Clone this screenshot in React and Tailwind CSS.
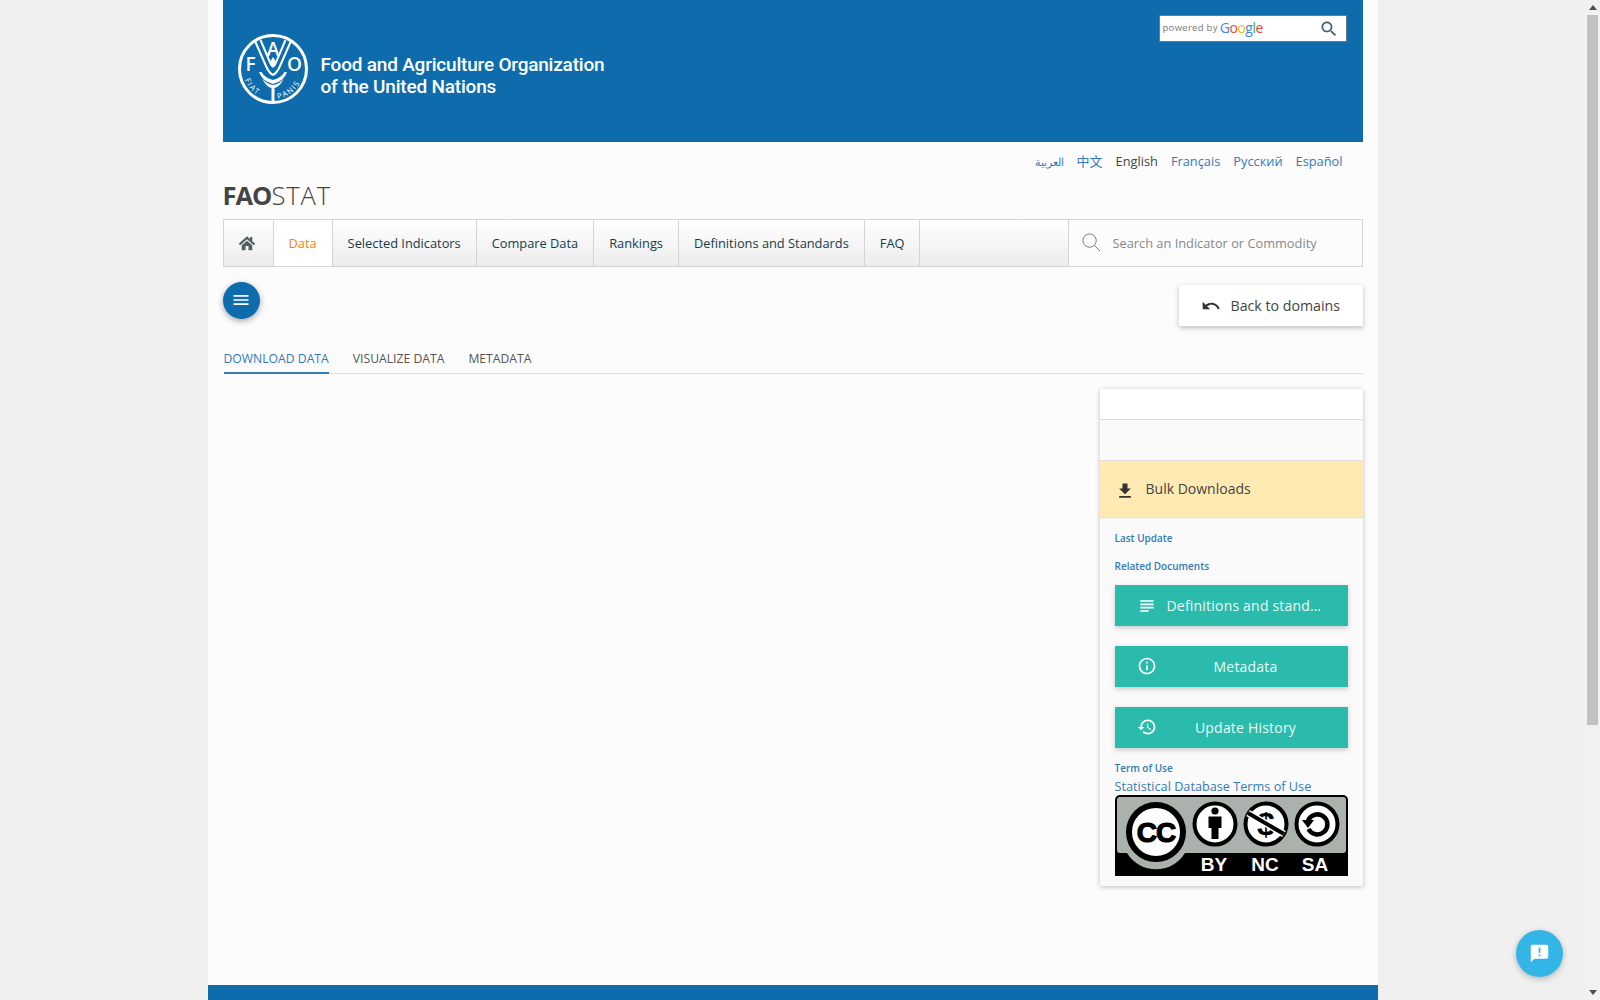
import React from 'react';

const LANGS = [
  { label: 'العربية', small: true },
  { label: '中文', cjk: true },
  { label: 'English', active: true },
  { label: 'Français' },
  { label: 'Русский' },
  { label: 'Español' },
];

const NAV = ['Selected Indicators', 'Compare Data', 'Rankings', 'Definitions and Standards', 'FAQ'];

const Icon = ({ d, className }) => (
  <svg viewBox="0 0 24 24" fill="currentColor" className={className}>
    <path d={d} />
  </svg>
);

const MENU = 'M3 18h18v-2H3v2zm0-5h18v-2H3v2zm0-7v2h18V6H3z';
const UNDO = 'M12.5 8c-2.65 0-5.05.99-6.9 2.6L2 7v9h9l-3.62-3.62c1.39-1.16 3.16-1.88 5.12-1.88 3.54 0 6.55 2.31 7.6 5.5l2.37-.78C21.08 11.03 17.15 8 12.5 8z';
const DOWNLOAD = 'M19 9h-4V3H9v6H5l7 7 7-7zM5 18v2h14v-2H5z';
const SUBJECT = 'M14 17H4v2h10v-2zm6-8H4v2h16V9zM4 15h16v-2H4v2zM4 5v2h16V5H4z';
const INFO = 'M11 7h2v2h-2zm0 4h2v6h-2zm1-9C6.48 2 2 6.48 2 12s4.48 10 10 10 10-4.48 10-10S17.52 2 12 2zm0 18c-4.41 0-8-3.59-8-8s3.59-8 8-8 8 3.59 8 8-3.59 8-8 8z';
const HISTORY = 'M13 3c-4.97 0-9 4.03-9 9H1l3.89 3.89.07.14L9 12H6c0-3.87 3.13-7 7-7s7 3.13 7 7-3.13 7-7 7c-1.93 0-3.68-.79-4.94-2.06l-1.42 1.42C8.27 19.99 10.51 21 13 21c4.97 0 9-4.03 9-9s-4.03-9-9-9zm-1 5v5l4.28 2.54.72-1.21-3.5-2.08V8H12z';
const ANNOUNCE = 'M20 2H4c-1.1 0-1.99.9-1.99 2L2 22l4-4h14c1.1 0 2-.9 2-2V4c0-1.1-.9-2-2-2zm-7 9h-2V5h2v6zm0 4h-2v-2h2v2z';
const SEARCH = 'M15.5 14h-.79l-.28-.27C15.41 12.59 16 11.11 16 9.5 16 5.91 13.09 3 9.5 3S3 5.91 3 9.5 5.91 16 9.5 16c1.61 0 3.09-.59 4.23-1.57l.27.28v.79l5 4.99L20.49 19l-4.99-5zm-6 0C7.01 14 5 11.99 5 9.5S7.01 5 9.5 5 14 7.01 14 9.5 11.99 14 9.5 14z';

// FAO roundel, letters stay real svg text
const FaoLogo = () => (
  <svg viewBox="0 0 70 70" className="w-[70px] h-[70px] shrink-0">
    <circle cx="35" cy="35" r="33.5" fill="none" stroke="#fff" strokeWidth="3" />
    <g fill="none" stroke="#fff" strokeWidth="2">
      <path d="M17 7 L28 32 Q31 39 35 41" />
      <path d="M22.500 6 L31 26 Q33 31 35 33" />
      <path d="M53 7 L42 32 Q39 39 35 41" />
      <path d="M47.500 6 L39 26 Q37 31 35 33" />
    </g>
    <g fill="#fff" fontFamily="'Open Sans', sans-serif" fontWeight="600" fontSize="19" textAnchor="middle">
      <text x="35" y="22">A</text>
      <text x="12.500" y="37">F</text>
      <text x="56.500" y="37">O</text>
    </g>
    <path d="M21 38 Q24 47 35 50 Q46 47 49 38 L46.500 38 Q43 44 35 46 Q27 44 23.500 38 Z" fill="#fff" />
    <path d="M24 44 Q28 53 33.500 54 L33.500 67 L36.500 67 L36.500 54 Q42 53 46 44 Q42 50 35 51 Q28 50 24 44 Z" fill="#fff" />
    <path d="M35 23 Q39 29 37.500 31 Q35 34 32.500 31 Q31 29 35 23 Z" fill="#fff" />
    <defs>
      <path id="fiat" d="M5 38 A30 30 0 0 0 32 65" />
      <path id="panis" d="M38 65 A30 30 0 0 0 65 38" />
    </defs>
    <g fill="#fff" fontFamily="'Open Sans', sans-serif" fontSize="7.500" letterSpacing="1.500">
      <text><textPath href="#fiat" startOffset="8">FIAT</textPath></text>
      <text><textPath href="#panis" startOffset="2">PANIS</textPath></text>
    </g>
  </svg>
);

const CcBadge = () => (
  <svg viewBox="0 0 233 81" className="w-[233px] h-[81px] block">
    <rect x="0" y="0" width="233" height="81" rx="5" fill="#000" />
    <rect x="2" y="2" width="229" height="56" rx="3" fill="#aab2ab" />
    <circle cx="41" cy="40" r="36" fill="#aab2ab" />
    <rect x="0" y="76" width="233" height="5" fill="#000" />
    <path d="M6 58 H12 A34 34 0 0 0 70 58 H76 V76 H6 Z" fill="#000" />
    <circle cx="41" cy="37" r="27" fill="#fff" stroke="#000" strokeWidth="6" />
    <text x="41" y="47" textAnchor="middle" fontFamily="'Liberation Sans', sans-serif" fontWeight="700" fontSize="28" letterSpacing="-1" fill="#000" stroke="#000" strokeWidth="1.200">CC</text>

    <circle cx="100" cy="29" r="20.500" fill="#fff" stroke="#000" strokeWidth="4" />
    <circle cx="100" cy="16" r="3.600" fill="#000" />
    <path d="M93.500 21.500 H106.500 V33 H103.500 V44 H96.500 V33 H93.500 Z" fill="#000" />

    <circle cx="151" cy="29" r="20.500" fill="#fff" stroke="#000" strokeWidth="4" />
    <text x="151" y="40" textAnchor="middle" fontFamily="'Liberation Sans', sans-serif" fontWeight="700" fontSize="32" fill="#000">$</text>
    <path d="M133 18 L169 39" stroke="#fff" strokeWidth="7" />
    <path d="M133 18 L169 39" stroke="#000" strokeWidth="4" />

    <circle cx="202" cy="29" r="20.500" fill="#fff" stroke="#000" strokeWidth="4" />
    <path d="M193 26 A10 10 0 1 1 193.500 34" fill="none" stroke="#000" strokeWidth="4.500" />
    <path d="M187 25 L199 25 L193 33 Z" fill="#000" />

    <g fill="#fff" fontFamily="'Liberation Sans', sans-serif" fontWeight="700" fontSize="19" textAnchor="middle">
      <text x="99" y="76">BY</text>
      <text x="150" y="76">NC</text>
      <text x="200" y="76">SA</text>
    </g>
  </svg>
);

const SideButton = ({ icon, iconClass, children, left }) => (
  <button className="w-[233px] h-[41px] flex items-center pl-[22px] pr-[13px] bg-[#2bbbad] text-[#eafaf7] text-[14px] tracking-[0.2px] shadow-[0_2px_5px_rgba(0,0,0,0.2)]">
    <Icon d={icon} className={iconClass || 'w-[20px] h-[20px] shrink-0 text-white'} />
    <span className={left ? 'ml-[10px] whitespace-nowrap' : 'flex-1 text-center'}>{children}</span>
  </button>
);

export default function App() {
  return (
    <div className="h-screen flex overflow-hidden relative bg-[#f0f0f0] font-['Open_Sans',sans-serif]">
      <div className="flex-1 min-w-0 flex justify-center">
        <div className="w-[1170px] h-full flex flex-col bg-[#fcfcfc]">
          <div className="flex-1 min-h-0 px-[15px] flex flex-col">
            {/* top banner */}
            <header className="h-[142px] bg-[#0e6cac] flex justify-between items-start shrink-0">
              <div className="flex items-center mt-[34px] ml-[15px]">
                <FaoLogo />
                <div className="ml-[13px] mt-[14px] text-white text-[19px] font-medium leading-[22.500px] tracking-[-0.2px] whitespace-nowrap font-['Roboto',sans-serif]">
                  <div>Food and Agriculture Organization</div>
                  <div>of the United Nations</div>
                </div>
              </div>
              <div className="mt-[15px] mr-[16px] w-[188px] h-[27px] bg-white border border-[#5f7f8f] flex items-center justify-between pl-[3px] pr-[7px]">
                <div className="flex items-center gap-[2px]">
                  <span className="text-[9.500px] text-[#777] tracking-[0.3px]">powered by</span>
                  <span className="text-[14px] tracking-[-0.5px] leading-none -mt-[2px]">
                    <span className="text-[#4285f4]">G</span>
                    <span className="text-[#ea4335]">o</span>
                    <span className="text-[#fbbc05]">o</span>
                    <span className="text-[#4285f4]">g</span>
                    <span className="text-[#34a853]">l</span>
                    <span className="text-[#ea4335]">e</span>
                  </span>
                </div>
                <Icon d={SEARCH} className="w-[20px] h-[20px] text-[#3c6270]" />
              </div>
            </header>

            {/* language switch */}
            <div className="h-[38px] pt-[2px] flex items-center justify-end gap-[13px] pr-[20px] text-[12.800px] shrink-0">
              {LANGS.map((l) => (
                <a
                  key={l.label}
                  className={
                    l.active
                      ? 'text-[#444]'
                      : l.small
                      ? 'text-[#337ab7] text-[11px]'
                      : l.cjk
                      ? "text-[#337ab7] text-[13px] -mt-[2px] font-['Noto_Sans_CJK_SC',sans-serif]"
                      : 'text-[#337ab7]'
                  }
                >
                  {l.label}
                </a>
              ))}
            </div>

            <div className="h-[30px] mb-[9px] flex items-center text-[25.500px] text-[#444] shrink-0">
              <span className="font-bold tracking-[-1px]">FAO</span>
              <span className="font-light tracking-[0.9px]">STAT</span>
            </div>

            {/* main nav */}
            <nav className="h-[48px] flex border border-[#d4d4d4] bg-gradient-to-b from-white to-[#ececec] text-[12.820px] text-[#123f4c] shrink-0">
              <div className="w-[50px] flex items-center justify-center border-r border-[#d4d4d4]">
                <svg viewBox="0 0 24 24" className="w-[18px] h-[18px] -ml-[2px]" fill="#555f66">
                  <path d="M12 3 L1 13 L3 15 L12 7 L21 15 L23 13 L19 9.500 V4 H16 V6.800 Z" />
                  <path d="M5 15 L12 9 L19 15 V21.500 H14 V16 H10 V21.500 H5 Z" />
                </svg>
              </div>
              <div className="flex items-center pt-[2px] px-[15px] bg-white text-[#f58220] border-r border-[#d4d4d4]">Data</div>
              {NAV.map((n) => (
                <div key={n} className="flex items-center pt-[2px] px-[15px] border-r border-[#d4d4d4] whitespace-nowrap">
                  {n}
                </div>
              ))}
              <div className="flex-1" />
              <div className="w-[294px] flex items-center bg-[#fcfcfc] border-l border-[#d4d4d4] pl-[13px]">
                <svg viewBox="0 0 20 20" className="w-[19px] h-[19px] shrink-0 -mt-[1px]" fill="none" stroke="#777" strokeWidth="1">
                  <circle cx="8" cy="8" r="7" />
                  <path d="M13 13 L19 19" />
                </svg>
                <input
                  placeholder="Search an Indicator or Commodity"
                  className="ml-[12px] mt-[2px] flex-1 min-w-0 bg-transparent outline-none text-[12.800px] placeholder:text-[#888]"
                />
              </div>
            </nav>

            {/* actions */}
            <div className="h-[79px] flex justify-between items-start shrink-0">
              <button className="mt-[15px] w-[37px] h-[37px] rounded-full bg-[#0e6cac] flex items-center justify-center shadow-[0_2px_6px_rgba(0,0,0,0.35)]">
                <Icon d={MENU} className="w-[20px] h-[20px] text-white -mt-[1px]" />
              </button>
              <button className="mt-[18px] w-[184px] h-[41px] bg-white flex items-center pl-[22px] text-[14.200px] text-[#444] shadow-[0_2px_5px_rgba(0,0,0,0.25)]">
                <Icon d={UNDO} className="w-[20px] h-[20px] text-[#333]" />
                <span className="ml-[10px]">Back to domains</span>
              </button>
            </div>

            {/* tabs */}
            <div className="h-[28px] flex gap-[24px] border-b border-[#dcdcdc] text-[12.200px] text-[#555] shrink-0 pl-[1px]">
              <div className="h-[28px] flex items-center text-[#337ab7] border-b-2 border-[#337ab7]">DOWNLOAD DATA</div>
              <div className="h-[26px] flex items-center">VISUALIZE DATA</div>
              <div className="h-[26px] flex items-center">METADATA</div>
            </div>

            {/* right panel */}
            <div className="flex justify-end mt-[15px]">
              <aside className="w-[263px] bg-[#fafafa] rounded-[2px] shadow-[0_1px_5px_rgba(0,0,0,0.25)]">
                <div className="h-[31px] bg-white border-b border-[#dedede]" />
                <div className="h-[41px] border-b border-[#dedede]" />
                <div className="h-[57px] bg-[#ffeab3] border-b border-[#dedede] flex items-center pl-[15px] text-[14px] text-[#444]">
                  <Icon d={DOWNLOAD} className="w-[20px] h-[20px] text-[#333] mt-[3px]" />
                  <span className="ml-[11px] -mt-[1px]">Bulk Downloads</span>
                </div>
                <div className="px-[15px] pb-[10px]">
                  <div className="mt-[13px] h-[14px] leading-[14px] text-[10px] font-semibold text-[#337ab7]">Last Update</div>
                  <div className="mt-[14px] h-[14px] leading-[14px] text-[10px] font-semibold text-[#337ab7]">Related Documents</div>
                  <div className="mt-[12px] flex flex-col gap-[20px]">
                    <SideButton icon={SUBJECT} left>Definitions and stand…</SideButton>
                    <SideButton icon={INFO} iconClass="w-[20px] h-[20px] shrink-0 text-white -mt-[2px]">Metadata</SideButton>
                    <SideButton icon={HISTORY} iconClass="w-[20px] h-[20px] shrink-0 text-white -mt-[2px]">Update History</SideButton>
                  </div>
                  <div className="mt-[13px] h-[14px] leading-[14px] text-[10px] font-semibold text-[#337ab7]">Term of Use</div>
                  <div className="mt-[3px] h-[17px] leading-[17px] text-[12.700px] text-[#337ab7]">Statistical Database Terms of Use</div>
                  <CcBadge />
                </div>
              </aside>
            </div>
          </div>
          <footer className="h-[15px] bg-[#0e6cac] shrink-0" />
        </div>
      </div>

      {/* browser scrollbar */}
      <div className="w-[15px] shrink-0 bg-[#f1f1f1] flex flex-col items-center">
        <div className="h-[15px] flex items-center justify-center">
          <div className="w-0 h-0 border-x-[4px] border-x-transparent border-b-[5px] border-b-[#505050]" />
        </div>
        <div className="w-[11px] h-[710px] bg-[#c1c1c1]" />
        <div className="flex-1" />
        <div className="h-[15px] flex items-center justify-center">
          <div className="w-0 h-0 border-x-[4px] border-x-transparent border-t-[5px] border-t-[#505050]" />
        </div>
      </div>

      {/* feedback button */}
      <button className="absolute right-[37px] bottom-[23px] w-[47px] h-[47px] rounded-full bg-[#33b5e5] flex items-center justify-center shadow-[0_2px_6px_rgba(0,0,0,0.25)]">
        <Icon d={ANNOUNCE} className="w-[21px] h-[21px] text-white" />
      </button>
    </div>
  );
}
